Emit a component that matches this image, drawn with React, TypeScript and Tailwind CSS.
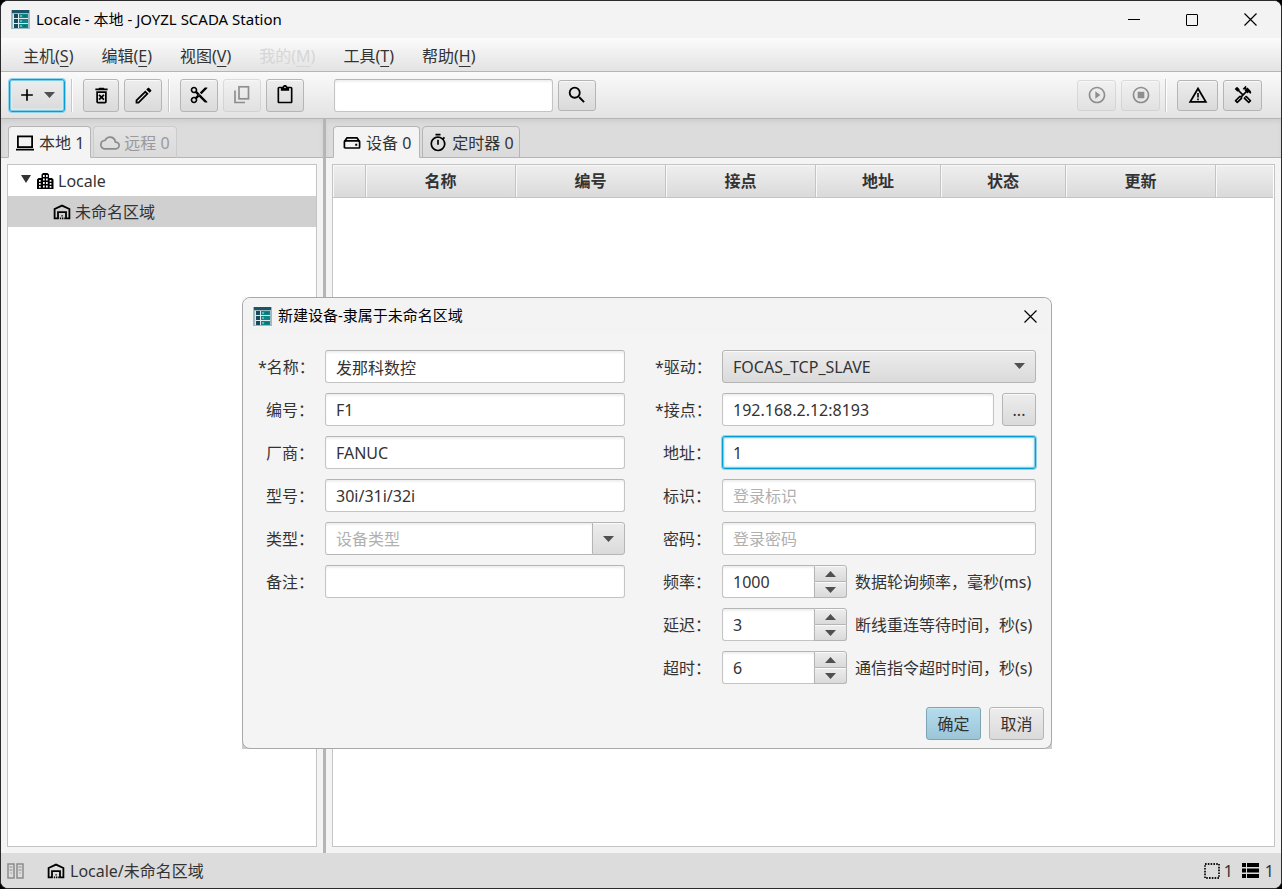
import type { ComponentProps, ReactNode } from "react";
import clsx from "clsx";
import {
  MdAdd,
  MdContentCut,
  MdOutlineCloud,
  MdOutlineContentPaste,
  MdOutlineDeleteForever,
  MdOutlineEdit,
  MdOutlineHandyman,
  MdOutlineTimer,
  MdPlayCircleOutline,
  MdOutlineStopCircle,
  MdSearch,
} from "react-icons/md";

const menus = [
  { label: "主机", key: "S" },
  { label: "编辑", key: "E" },
  { label: "视图", key: "V" },
  { label: "我的", key: "M", disabled: true },
  { label: "工具", key: "T" },
  { label: "帮助", key: "H" },
];

const columns = [
  { label: "", width: "w-[33px]" },
  { label: "名称", width: "w-[150px]" },
  { label: "编号", width: "w-[150px]" },
  { label: "接点", width: "w-[150px]" },
  { label: "地址", width: "w-[125px]" },
  { label: "状态", width: "w-[125px]" },
  { label: "更新", width: "w-[150px]" },
  { label: "", width: "" },
];

/* ---------- icons ---------- */

function AppIcon() {
  return (
    <svg width="19" height="19" viewBox="0 0 19 19" className="shrink-0">
      <rect width="19" height="19" fill="#9db9c2" />
      <rect x="1" y="0" width="17" height="3" fill="#1a5466" />
      <rect x="2" y="4" width="15" height="14" fill="#dfeaec" />
      <path d="M3 4h4v4H3zM3 9h4v4H3zM3 14h4v4H3z" fill="#17495c" />
      <path d="M8 4h9v4H8zM8 9h9v4H8zM8 14h9v4H8z" fill="#0b8585" />
      <path d="M9 6h2M9 11h2M9 16h2" stroke="#bfe3e3" />
      <path d="M12.500 6h3M12.500 16h3" stroke="#0a5c68" />
    </svg>
  );
}

function CopyIcon() {
  return (
    <svg width="20" height="20" viewBox="0 0 20 20" fill="none" stroke="currentColor" strokeWidth="1.7">
      <rect x="7" y="1.8" width="9.5" height="12" />
      <path d="M3 5.500v12h10" />
    </svg>
  );
}

function WarningIcon() {
  return (
    <svg width="20" height="18" viewBox="0 0 20 18" fill="none" stroke="currentColor">
      <path d="M10 2.500 17.800 15.900H2.200z" strokeWidth="1.800" />
      <path d="M10 7v4.500M10 12.500v1.700" strokeWidth="1.600" />
    </svg>
  );
}

function LaptopIcon() {
  return (
    <svg width="18" height="16" viewBox="0 0 18 16" fill="none" stroke="currentColor">
      <rect x="1.9" y="1.4" width="14.2" height="10.7" strokeWidth="1.8" />
      <path d="M0 14.6h18" strokeWidth="1.8" />
    </svg>
  );
}

function DriveIcon() {
  return (
    <svg width="18" height="14" viewBox="0 0 18 14" fill="none" stroke="currentColor" strokeWidth="1.7">
      <rect x="1.4" y="4.800" width="15.2" height="7.200" rx="0.800" />
      <path d="M1.600 5.500 4 1.800h10l2.400 3.700" strokeLinejoin="round" />
      <path d="M12.200 8.800h2" strokeWidth="2" />
    </svg>
  );
}

function CityIcon() {
  return (
    <svg width="17" height="16" viewBox="0 0 17 16" fill="currentColor" fillRule="evenodd">
      <path d="M4.500 1.500 6 0h4.500L12 1.500V5h3l1.500 1.500V16H0V6.500L1.500 5h3zM6 2h1.700v1.900H6zm3 0h1.700v1.900H9zM6 5.500h1.700v1.900H6zm3 0h1.700v1.900H9zM6 9h1.700v1.900H6zm3 0h1.700v1.900H9zM6 12.500h1.700v1.900H6zm3 0h1.700v1.900H9zM2 7h1.700v1.700H2zm0 3h1.700v1.700H2zm0 3h1.700v1.700H2zM12.700 7h1.700v1.700h-1.700zm0 3h1.700v1.700h-1.700zm0 3h1.700v1.700h-1.700z" />
    </svg>
  );
}

function WarehouseIcon() {
  return (
    <svg width="18" height="16" viewBox="0 0 18 16" fill="none" stroke="currentColor">
      <path d="M5 14.400H1.600V5L9 1.600 16.400 5v9.400H13V8.200H5z" strokeWidth="1.800" />
      <path d="M7.400 15.200v-1.600M9.400 15.200v-1.600M11.200 15.200v-1.600M8.400 11.900h1.400" strokeWidth="1.200" />
    </svg>
  );
}

function CabinetsIcon() {
  return (
    <svg width="17" height="16" viewBox="0 0 17 16" fill="none" stroke="#8c8c8c">
      <path d="M1 1h6v14H1zM10 1h6v14h-6z" strokeWidth="1.500" />
      <path d="M2.500 4h3M2.500 7h3M11.500 4h3M11.500 7h3M3.500 10h1.200M12.500 10h1.200" />
    </svg>
  );
}

function SelectionIcon() {
  return (
    <svg width="16" height="16" viewBox="0 0 16 16" fill="none" stroke="#111">
      <rect x="1" y="1" width="14" height="14" strokeWidth="1.800" strokeDasharray="1.600 1.200" />
    </svg>
  );
}

function ListIcon() {
  return (
    <svg width="17" height="15" viewBox="0 0 17 15" fill="#000">
      <path d="M0 0h4v4H0zM5 0h12v4H5zM0 5.500h4v4H0zM5 5.500h12v4H5zM0 11h4v4H0zM5 11h12v4H5z" />
    </svg>
  );
}

function Triangle({ up = false, className }: { up?: boolean; className?: string }) {
  return (
    <svg width="11" height="6" viewBox="0 0 11 6" className={clsx("fill-[#505050]", className)}>
      <path d={up ? "M0 6 5.500 0 11 6z" : "M0 0h11L5.500 6z"} />
    </svg>
  );
}

function CloseIcon() {
  return (
    <svg width="13" height="13" viewBox="0 0 13 13" stroke="#000" strokeWidth="1.200">
      <path d="M.5.5l12 12M12.500.5l-12 12" />
    </svg>
  );
}

/* ---------- controls ---------- */

const raisedFill = "rounded-[3px] border bg-linear-to-b from-[#ededed] to-[#dadada]";
const raised = `${raisedFill} border-[#b5b5b5] shadow-[inset_0_1px_0_#fafafa]`;
const fieldBox = "h-[33px] min-w-0 rounded-[3px] border bg-white px-[10px] outline-none placeholder:text-[#b0b0b0]";
const field = `${fieldBox} border-[#c4c4c4] border-t-[#b5b5b5] shadow-[inset_0_2px_2px_#f0f0f0]`;
const focusRing = "border-[#039ed3] shadow-[0_0_0_1px_#8fd3ea,inset_0_0_0_1px_#7fcbe6,inset_0_0_2px_2px_#d5eff8]";

function ToolButton({
  label,
  className,
  active,
  ...props
}: { label: string; active?: boolean } & ComponentProps<"button">) {
  return (
    <button
      type="button"
      aria-label={label}
      className={clsx(
        active ? [raisedFill, focusRing] : raised,
        "flex items-center justify-center text-black disabled:opacity-40",
        className
      )}
      {...props}
    />
  );
}

function Separator() {
  return <div className="h-[33px] w-[2px] border-l border-[#c8c8c8] bg-white" />;
}

function Row({ id, label, children }: { id: string; label: string; children: ReactNode }) {
  return (
    <div className="flex items-center gap-[11px]">
      <label htmlFor={id} className="w-14 shrink-0 text-right whitespace-nowrap">
        {label}
      </label>
      <div className="flex min-w-0 flex-1 gap-2">{children}</div>
    </div>
  );
}

function TextRow({
  id,
  label,
  active,
  ...props
}: { id: string; label: string; active?: boolean } & ComponentProps<"input">) {
  return (
    <Row id={id} label={label}>
      <input id={id} className={clsx(active ? [fieldBox, focusRing] : field, "flex-1")} {...props} />
    </Row>
  );
}

function SpinnerRow({ id, label, value, hint }: { id: string; label: string; value: string; hint: string }) {
  return (
    <Row id={id} label={label}>
      <div className="flex">
        <input id={id} defaultValue={value} className={clsx(field, "w-[92px] rounded-r-none border-r-0")} />
        <div className="flex w-[33px] flex-col">
          <button
            type="button"
            aria-label={`${label}+`}
            className={clsx(raised, "flex h-[17px] items-center justify-center rounded-l-none rounded-br-none")}
          >
            <Triangle up />
          </button>
          <button
            type="button"
            aria-label={`${label}-`}
            className={clsx(raised, "flex h-4 items-center justify-center rounded-l-none rounded-tr-none border-t-0")}
          >
            <Triangle />
          </button>
        </div>
      </div>
      <span className="self-center whitespace-nowrap">{hint}</span>
    </Row>
  );
}

function Tab({
  active,
  disabled,
  icon,
  className = "px-[6px]",
  children,
}: {
  active?: boolean;
  disabled?: boolean;
  icon: ReactNode;
  className?: string;
  children: ReactNode;
}) {
  return (
    <button
      type="button"
      role="tab"
      aria-selected={!!active}
      disabled={disabled}
      className={clsx(
        "-mb-px flex h-8 items-center gap-1 rounded-t-[4px] border pt-[2px]",
        active ? "border-b-[#f4f4f4] bg-[#f4f4f4]" : "border-b-[#b5b5b5] bg-linear-to-b from-[#e4e4e4] to-[#dadada]",
        disabled ? "border-x-[#cccccc] border-t-[#cccccc] text-[#9a9a9a]" : "border-x-[#b5b5b5] border-t-[#b5b5b5]",
        className
      )}
    >
      <span className={clsx("flex w-5 justify-center", disabled ? "text-[#8c8c8c]" : "text-black")}>{icon}</span>
      {children}
    </button>
  );
}

function TabStrip({ children }: { children: ReactNode }) {
  return (
    <div
      role="tablist"
      className="flex h-[39px] shrink-0 items-end gap-[2px] border-b border-[#b5b5b5] bg-[#dcdcdc] pl-[7px] shadow-[inset_0_3px_4px_#cfcfcf]"
    >
      {children}
    </div>
  );
}

/* ---------- window parts ---------- */

function TitleBar() {
  return (
    <header className="flex h-[37px] shrink-0 items-center bg-[#f3f3f3] pl-[10px] text-[15px] text-black">
      <AppIcon />
      <h1 className="ml-[6px] flex-1 pb-[2px]">Locale - 本地 - JOYZL SCADA Station</h1>
      <button type="button" aria-label="最小化" className="flex h-full w-[58px] items-center justify-center">
        <span className="h-px w-3 bg-black" />
      </button>
      <button type="button" aria-label="最大化" className="flex h-full w-[58px] items-center justify-center">
        <span className="size-3 rounded-[1px] border border-black" />
      </button>
      <button type="button" aria-label="关闭" className="mr-[2px] flex h-full w-[58px] items-center justify-center">
        <CloseIcon />
      </button>
    </header>
  );
}

function MenuBar() {
  return (
    <nav className="flex h-[34px] shrink-0 items-center gap-[26px] border-b border-[#b5b5b5] bg-linear-to-b from-[#fbfbfb] to-[#e3e3e3] pt-[2px] pl-[21px]">
      {menus.map((menu) => (
        <button
          key={menu.key}
          type="button"
          disabled={menu.disabled}
          className="px-px underline-offset-4 disabled:text-[#d6d6d6]"
        >
          {menu.label}(<span className="underline">{menu.key}</span>)
        </button>
      ))}
    </nav>
  );
}

function Toolbar() {
  return (
    <div className="flex h-[47px] shrink-0 items-center border-b border-[#b5b5b5] bg-linear-to-b from-[#fafafa] to-[#e3e3e3] pr-[19px] pl-2">
      <ToolButton label="新建" active className="h-[33px] w-14 gap-[7px] pr-[3px]">
        <MdAdd size={20} />
        <Triangle />
      </ToolButton>
      <div className="ml-[6px] flex items-center gap-[10px]">
        <Separator />
        <div className="flex gap-[5px]">
          <ToolButton label="删除" className="h-[33px] w-9">
            <MdOutlineDeleteForever size={21} />
          </ToolButton>
          <ToolButton label="编辑" className="h-[33px] w-[38px]">
            <MdOutlineEdit size={21} />
          </ToolButton>
        </div>
      </div>
      <div className="ml-[6px] flex items-center gap-[10px]">
        <Separator />
        <div className="flex gap-[5px]">
          <ToolButton label="剪切" className="h-[33px] w-[38px]">
            <MdContentCut size={20} />
          </ToolButton>
          <ToolButton label="复制" className="h-[33px] w-[38px]" disabled>
            <CopyIcon />
          </ToolButton>
          <ToolButton label="粘贴" className="h-[33px] w-[38px]">
            <MdOutlineContentPaste size={20} />
          </ToolButton>
        </div>
      </div>
      <input type="search" aria-label="搜索" className={clsx(field, "ml-[30px] w-[219px]")} />
      <ToolButton label="查找" className="ml-[5px] h-[31px] w-[38px]">
        <MdSearch size={22} />
      </ToolButton>

      <div className="ml-auto flex items-center gap-[5px]">
        <ToolButton label="启动" className="h-[31px] w-[39px]" disabled>
          <MdPlayCircleOutline size={20} />
        </ToolButton>
        <ToolButton label="停止" className="h-[31px] w-[39px]" disabled>
          <MdOutlineStopCircle size={20} />
        </ToolButton>
        <Separator />
        <ToolButton label="警报" className="ml-[5px] h-[31px] w-[41px]">
          <WarningIcon />
        </ToolButton>
        <ToolButton label="工具" className="h-[31px] w-[39px]">
          <MdOutlineHandyman size={20} />
        </ToolButton>
      </div>
    </div>
  );
}

function TreePane() {
  return (
    <aside className="flex w-[322px] shrink-0 flex-col">
      <TabStrip>
        <Tab active icon={<LaptopIcon />}>
          本地 1
        </Tab>
        <Tab disabled icon={<MdOutlineCloud size={20} />}>
          远程 0
        </Tab>
      </TabStrip>
      <ul role="tree" className="m-[6px] flex-1 border border-[#c4c4c4] bg-white">
        <li role="treeitem" aria-expanded="true">
          <div className="flex h-[31px] items-center pl-[13px]">
            <svg width="10" height="8" viewBox="0 0 10 8" className="mb-[3px] fill-[#333333]">
              <path d="M0 0h10L5 8z" />
            </svg>
            <span className="mr-1 ml-[6px] text-black">
              <CityIcon />
            </span>
            Locale
          </div>
          <ul role="group">
            <li role="treeitem" className="flex h-[31px] items-center gap-1 bg-[#d0d0d0] pl-[45px]">
              <span className="text-black">
                <WarehouseIcon />
              </span>
              未命名区域
            </li>
          </ul>
        </li>
      </ul>
    </aside>
  );
}

function DevicePane() {
  return (
    <main className="flex min-w-0 flex-1 flex-col">
      <TabStrip>
        <Tab active icon={<DriveIcon />} className="px-2">
          设备 0
        </Tab>
        <Tab icon={<MdOutlineTimer size={20} />} className="px-[5px]">
          定时器 0
        </Tab>
      </TabStrip>
      <div className="m-[6px] flex-1 border border-[#c4c4c4] bg-white pr-px">
        <table className="w-full table-fixed border-separate border-spacing-0">
          <thead>
            <tr>
              {columns.map((col, i) => (
                <th
                  key={i}
                  className={clsx(
                    "h-[33px] border-b border-[#c4c4c4] bg-linear-to-b from-[#efefef] to-[#dadada] p-0 font-bold shadow-[inset_1px_1px_0_#f8f8f8]",
                    i < columns.length - 1 && "border-r",
                    col.width
                  )}
                >
                  {col.label}
                </th>
              ))}
            </tr>
          </thead>
        </table>
      </div>
    </main>
  );
}

function StatusBar() {
  return (
    <footer className="flex h-[35px] shrink-0 items-center bg-[#dcdcdc] pr-[7px] pl-[6px]">
      <CabinetsIcon />
      <span className="mr-[5px] ml-[23px] text-black">
        <WarehouseIcon />
      </span>
      Locale/未命名区域
      <div className="ml-auto flex items-center gap-1">
        <SelectionIcon />
        <span>1</span>
        <span className="ml-[5px]">
          <ListIcon />
        </span>
        <span className="ml-[2px]">1</span>
      </div>
    </footer>
  );
}

function DeviceDialog() {
  return (
    <div className="absolute top-[297px] left-[242px] w-[810px] bg-linear-to-b from-[#f8f8f8] to-[#cccccc]">
      <form
        role="dialog"
        aria-labelledby="dialog-title"
        className="rounded-lg border border-[#a8a8a8] bg-[#f4f4f4]"
        onSubmit={(e) => e.preventDefault()}
      >
        <div className="flex h-9 items-center rounded-t-lg bg-[#f3f3f3] pr-[14px] pl-[10px]">
          <AppIcon />
          <h2 id="dialog-title" className="ml-[6px] flex-1 pb-[2px] text-[15px] text-black">
            新建设备-隶属于未命名区域
          </h2>
          <button type="button" aria-label="关闭">
            <CloseIcon />
          </button>
        </div>

        <div className="flex gap-[30px] px-[15px] pt-4">
          <div className="flex w-[367px] flex-col gap-[10px]">
            <TextRow id="name" label="*名称：" defaultValue="发那科数控" />
            <TextRow id="code" label="编号：" defaultValue="F1" />
            <TextRow id="vendor" label="厂商：" defaultValue="FANUC" />
            <TextRow id="model" label="型号：" defaultValue="30i/31i/32i" />
            <Row id="type" label="类型：">
              <div className="flex flex-1">
                <input
                  id="type"
                  placeholder="设备类型"
                  className={clsx(field, "flex-1 rounded-r-none border-r-0 border-b-[#b5b5b5]")}
                />
                <button
                  type="button"
                  aria-label="选择设备类型"
                  className={clsx(raised, "flex w-[33px] items-center justify-center rounded-l-none")}
                >
                  <Triangle />
                </button>
              </div>
            </Row>
            <TextRow id="remark" label="备注：" />
          </div>

          <div className="flex min-w-0 flex-1 flex-col gap-[10px]">
            <Row id="driver" label="*驱动：">
              <div className="relative flex-1">
                <select
                  id="driver"
                  className={clsx(raised, "h-[33px] w-full appearance-none px-[10px] outline-none")}
                >
                  <option>FOCAS_TCP_SLAVE</option>
                </select>
                <Triangle className="pointer-events-none absolute top-[13px] right-[11px]" />
              </div>
            </Row>
            <Row id="endpoint" label="*接点：">
              <input id="endpoint" defaultValue="192.168.2.12:8193" className={clsx(field, "flex-1")} />
              <button type="button" className={clsx(raised, "h-[33px] w-[34px]")}>
                ...
              </button>
            </Row>
            <TextRow id="address" label="地址：" defaultValue="1" active />
            <TextRow id="user" label="标识：" placeholder="登录标识" />
            <TextRow id="password" label="密码：" type="password" placeholder="登录密码" />
            <SpinnerRow id="rate" label="频率：" value="1000" hint="数据轮询频率，毫秒(ms)" />
            <SpinnerRow id="delay" label="延迟：" value="3" hint="断线重连等待时间，秒(s)" />
            <SpinnerRow id="timeout" label="超时：" value="6" hint="通信指令超时时间，秒(s)" />
          </div>
        </div>

        <div className="flex justify-end gap-2 px-[7px] pt-[23px] pb-2">
          <button
            type="submit"
            className="h-[33px] w-[55px] rounded-[3px] border border-[#7fa3b3] bg-linear-to-b from-[#b4dcec] to-[#9cc6d8] shadow-[inset_0_1px_0_#c8e6f2]"
          >
            确定
          </button>
          <button type="button" className={clsx(raised, "h-[33px] w-[55px]")}>
            取消
          </button>
        </div>
      </form>
    </div>
  );
}

export default function App() {
  return (
    <div className="relative h-screen bg-black font-['Noto_Sans','Noto_Sans_CJK_SC',sans-serif] text-[16px] leading-6 text-[#333333]">
      <div className="flex h-full flex-col overflow-hidden rounded-lg border border-[#2b2b2b] bg-[#f4f4f4]">
        <TitleBar />
        <MenuBar />
        <Toolbar />
        <div className="flex min-h-0 flex-1">
          <TreePane />
          <div className="w-[3px] shrink-0 bg-[#b5b5b5]" />
          <DevicePane />
        </div>
        <StatusBar />
      </div>
      <DeviceDialog />
    </div>
  );
}
